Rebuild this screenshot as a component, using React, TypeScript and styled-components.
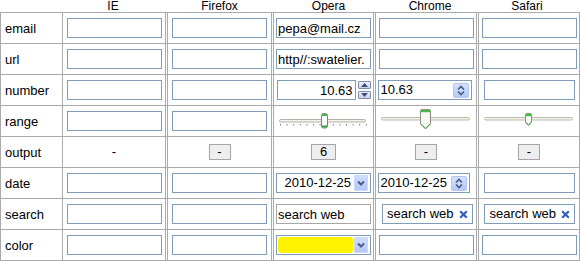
import React from 'react';
import styled, { createGlobalStyle } from 'styled-components';

const LINE = '#aaaaaa';
const FIELD = '#7f9db9';
const FONT = '"Liberation Sans", Arial, sans-serif';

const GlobalStyle = createGlobalStyle`
  html, body {
    margin: 0;
    padding: 0;
    background: #fff;
  }
  body {
    font-family: ${FONT};
    font-size: 13px;
    color: #000;
  }
`;

const Grid = styled.div`
  display: grid;
  grid-template-columns: 63px 105px 106px 102px 103px 101px;
  grid-template-rows: 12px 32px repeat(7, 31px);
  width: 580px;
`;

const HeadCell = styled.div<{ $dx?: number }>`
  font-size: 12px;
  line-height: 12px;
  text-align: center;
  padding-right: 3px;
  white-space: nowrap;
  transform: translateX(${p => p.$dx ?? 0}px);
`;

const Cell = styled.div<{ $col: number; $row: number }>`
  box-sizing: border-box;
  display: flex;
  align-items: center;
  justify-content: ${p => (p.$col === 0 ? 'flex-start' : 'center')};
  padding-left: ${p => (p.$col === 0 ? 4 : 0)}px;
  border-bottom: 1px solid ${LINE};
  border-top: ${p => (p.$row === 0 ? `1px solid ${LINE}` : 'none')};
  border-left: ${p => (p.$col === 0 ? `1px solid ${LINE}` : 'none')};
  border-right: ${p => (p.$col === 0 || p.$col === 5 ? `1px solid ${LINE}` : `3px double ${LINE}`)};
  overflow: hidden;
`;

const Field = styled.input<{ $w?: number; $gray?: boolean; $right?: boolean }>`
  box-sizing: border-box;
  width: ${p => p.$w ?? 95}px;
  height: 20px;
  margin: 0;
  padding: 0 ${p => (p.$right ? 2 : 1)}px 0 1px;
  border: 1px solid ${p => (p.$gray ? '#a7a7a7' : FIELD)};
  border-radius: 0;
  background: #fff;
  font: 13px ${FONT};
  color: #000;
  text-align: ${p => (p.$right ? 'right' : 'left')};
  outline: none;
`;

const Box = styled.div<{ $w: number; $mx?: string; $pad?: string }>`
  box-sizing: border-box;
  display: flex;
  align-items: center;
  width: ${p => p.$w}px;
  height: 20px;
  margin: ${p => p.$mx ?? '0'};
  padding: ${p => p.$pad ?? '0'};
  border: 1px solid ${FIELD};
  background: #fff;
  white-space: nowrap;
`;

const BoxText = styled.span<{ $right?: boolean; $pad?: string }>`
  flex: 1;
  text-align: ${p => (p.$right ? 'right' : 'left')};
  padding: ${p => p.$pad ?? '0'};
  line-height: 16px;
`;

const NumberGroup = styled.div`
  display: flex;
  align-items: center;
  justify-content: space-between;
  width: 94px;
`;

const SpinStack = styled.div`
  display: flex;
  flex-direction: column;
  gap: 2px;
`;

const OperaSpinBtn = styled.span`
  box-sizing: border-box;
  display: flex;
  align-items: center;
  justify-content: center;
  width: 13px;
  height: 8px;
  border: 1px solid #7d8fb0;
  border-radius: 1px;
  background: linear-gradient(#eef2f9, #c9d3e6);
`;

const ChromeSpin = styled.span`
  box-sizing: border-box;
  display: flex;
  width: 16px;
  height: 15px;
  margin-right: 1px;
  border: 1px solid #b3c5ee;
  border-radius: 2px;
  background: linear-gradient(#d6e2fd, #b4c9f7);
`;

const DropBtn = styled.span`
  box-sizing: border-box;
  display: flex;
  width: 14px;
  height: 16px;
  border: 1px solid #c9d8fc;
  border-radius: 1px;
  background: linear-gradient(#cfdcfd, #b3c7f7);
`;

const Swatch = styled.span`
  flex: 1;
  height: 16px;
  margin-right: 1px;
  border-radius: 3px;
  background: #fff200;
`;

const OutBtn = styled.span<{ $w?: number }>`
  box-sizing: border-box;
  display: inline-flex;
  align-items: center;
  justify-content: center;
  width: ${p => p.$w ?? 22}px;
  height: 16px;
  border: 1px solid #a5a5a5;
  background: #eeeeee;
  font-size: 13px;
  line-height: 14px;
`;

const Plain = styled.span`
  line-height: 16px;
`;

const Svg = styled.svg`
  display: block;
  flex: none;
`;

const Tri = ({ up }: { up?: boolean }) => (
  <Svg width="7" height="4" viewBox="0 0 7 4">
    <polygon points={up ? '0,4 3.5,0 7,4' : '0,0 3.5,4 7,0'} fill="#3d4f78" />
  </Svg>
);

const Chevrons = () => (
  <Svg width="14" height="13" viewBox="0 0 14 13">
    <path d="M4 5.5 L7 2.5 L10 5.5" fill="none" stroke="#4a5a80" strokeWidth="1.6" />
    <path d="M4 7.5 L7 10.5 L10 7.5" fill="none" stroke="#4a5a80" strokeWidth="1.6" />
  </Svg>
);

const DownChevron = () => (
  <Svg width="12" height="14" viewBox="0 0 12 14">
    <path d="M3 5.5 L6 8.5 L9 5.5" fill="none" stroke="#4d5d84" strokeWidth="2" />
  </Svg>
);

const ClearX = () => (
  <Svg width="9" height="9" viewBox="0 0 9 9">
    <path d="M1.2 1.2 L7.8 7.8 M7.8 1.2 L1.2 7.8" stroke="#2f5fbf" strokeWidth="2.2" />
  </Svg>
);

const OperaNumber = () => (
  <NumberGroup>
    <Field $w={79} $right value="10.63" readOnly />
    <SpinStack>
      <OperaSpinBtn><Tri up /></OperaSpinBtn>
      <OperaSpinBtn><Tri /></OperaSpinBtn>
    </SpinStack>
  </NumberGroup>
);

const ChromeNumber = ({ value, w }: { value: string; w: number }) => (
  <Box $w={w} $mx={`0 ${97 - w}px 0 0`} $pad="0 1px 0 2px">
    <BoxText>{value}</BoxText>
    <ChromeSpin><Chevrons /></ChromeSpin>
  </Box>
);

const OperaDate = () => (
  <Box $w={95} $pad="1px 2px 1px 1px">
    <BoxText $right $pad="0 3px 0 0">2010-12-25</BoxText>
    <DropBtn><DownChevron /></DropBtn>
  </Box>
);

const OperaColor = () => (
  <Box $w={95} $pad="1px 2px 1px 1px">
    <Swatch />
    <DropBtn><DownChevron /></DropBtn>
  </Box>
);

const SearchBox = ({ shift, padLeft }: { shift: number; padLeft: number }) => (
  <Box $w={91} $mx={`0 0 0 ${shift}px`} $pad={`0 4px 0 ${padLeft}px`}>
    <BoxText>search web</BoxText>
    <ClearX />
  </Box>
);

// opera: ticked track, capsule thumb
const OperaRange = () => (
  <Svg width="99" height="30" viewBox="0 0 99 30">
    <rect x="5.5" y="13.5" width="86" height="2.5" rx="1.2" fill="#f3f2ec" stroke="#b3b1a6" />
    {Array.from({ length: 14 }, (_, i) => (
      <rect key={i} x={6 + i * 6.6} y="18" width="1" height="1.5" fill="#7a7a7a" />
    ))}
    <rect x="47.5" y="7.5" width="6" height="14.5" rx="2" fill="#fbfbfb" stroke="#808080" />
    <rect x="48" y="8" width="5" height="2" fill="#45bd45" />
    <rect x="48" y="19.5" width="5" height="2" fill="#2fa23a" />
  </Svg>
);

// xp style thumb with pointed bottom
const PointThumbRange = ({ x, top, w, tip }: { x: number; top: number; w: number; tip: number }) => {
  const r = x + w;
  const mid = x + w / 2;
  const side = tip - w / 2;
  return (
    <Svg width="100" height="30" viewBox="0 0 100 30">
      <rect x="5.5" y="11.5" width="88" height="2.5" rx="1" fill="#f3f2ea" stroke="#bcbaad" />
      <path
        d={`M${x} ${top + 1} Q${x} ${top} ${x + 1} ${top} H${r - 1} Q${r} ${top} ${r} ${top + 1} V${side} L${mid} ${tip} L${x} ${side} Z`}
        fill="#f7f7f4"
        stroke="#8e8e82"
      />
      <rect x={x + 0.5} y={top + 0.5} width={w - 1} height="2.2" fill="#3fbe3f" />
      <path d={`M${x + 0.5} ${side} L${mid} ${tip - 0.7} L${r - 0.5} ${side}`} fill="none" stroke="#4aa54a" />
    </Svg>
  );
};

type Row = { label: string; cells: React.ReactNode[] };

const rows: Row[] = [
  {
    label: 'email',
    cells: [<Field readOnly />, <Field readOnly />, <Field readOnly value="pepa@mail.cz" />, <Field readOnly />, <Field readOnly />]
  },
  {
    label: 'url',
    cells: [<Field readOnly />, <Field readOnly />, <Field readOnly value="http//:swatelier." />, <Field readOnly />, <Field readOnly />]
  },
  {
    label: 'number',
    cells: [<Field readOnly />, <Field readOnly />, <OperaNumber />, <ChromeNumber value="10.63" w={94} />, <Field readOnly $w={91} />]
  },
  {
    label: 'range',
    cells: [
      <Field readOnly />,
      <Field readOnly />,
      <OperaRange />,
      <PointThumbRange x={44.5} top={3.5} w={10} tip={23} />,
      <PointThumbRange x={46.5} top={7.5} w={6} tip={19.5} />
    ]
  },
  {
    label: 'output',
    cells: [<Plain>-</Plain>, <OutBtn>-</OutBtn>, <OutBtn $w={25}>6</OutBtn>, <OutBtn>-</OutBtn>, <OutBtn>-</OutBtn>]
  },
  {
    label: 'date',
    cells: [<Field readOnly />, <Field readOnly />, <OperaDate />, <ChromeNumber value="2010-12-25" w={92} />, <Field readOnly $w={91} />]
  },
  {
    label: 'search',
    cells: [
      <Field readOnly />,
      <Field readOnly />,
      <Field readOnly $gray value="search web" />,
      <SearchBox shift={3} padLeft={4} />,
      <SearchBox shift={0} padLeft={5} />
    ]
  },
  {
    label: 'color',
    cells: [<Field readOnly />, <Field readOnly />, <OperaColor />, <Field readOnly />, <Field readOnly />]
  }
];

const browsers: [string, number][] = [
  ['IE', -1],
  ['Firefox', 0],
  ['Opera', 5],
  ['Chrome', 4],
  ['Safari', -1]
];

export default function App() {
  return (
    <>
      <GlobalStyle />
      <Grid>
        <HeadCell />
        {browsers.map(([b, dx]) => (
          <HeadCell key={b} $dx={dx}>{b}</HeadCell>
        ))}
        {rows.map((row, r) => (
          <React.Fragment key={row.label}>
            <Cell $col={0} $row={r}>{row.label}</Cell>
            {row.cells.map((c, i) => (
              <Cell key={i} $col={i + 1} $row={r}>{c}</Cell>
            ))}
          </React.Fragment>
        ))}
      </Grid>
    </>
  );
}
